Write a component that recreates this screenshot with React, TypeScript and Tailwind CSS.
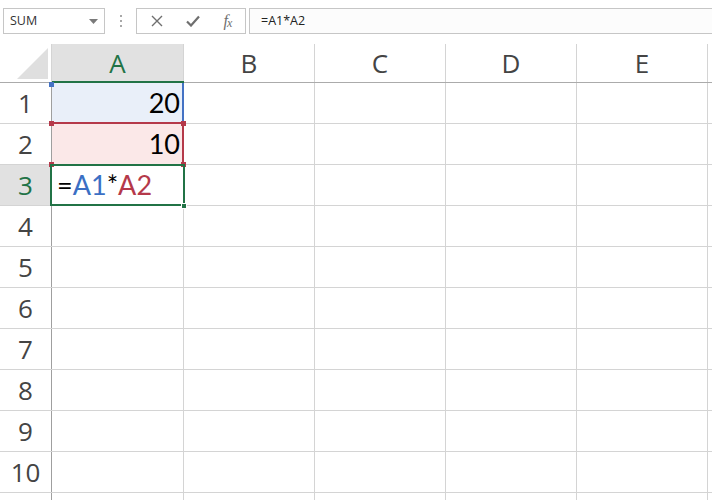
import React from "react";

const cols = ["A", "B", "C", "D", "E"];
const rows = [1, 2, 3, 4, 5, 6, 7, 8, 9, 10];

function Corner({ className }: { className: string }) {
  return <span className={`absolute w-[5px] h-[5px] ${className}`} />;
}

export default function App() {
  return (
    <div className="w-[712px] h-[500px] overflow-hidden bg-white font-['Open_Sans',sans-serif] text-[#444]">
      {/* Formula bar */}
      <div className="h-[44px] flex items-start pt-[8px] pl-[3px]">
        <div className="w-[102px] h-[26px] border border-[#c6c6c6] flex items-center justify-between pl-[6px] pr-[6px]">
          <span className="text-[12.5px] text-[#333]">SUM</span>
          <svg width="9" height="5" viewBox="0 0 9 5">
            <path d="M0 0h9L4.5 5z" fill="#7a7a7a" />
          </svg>
        </div>
        <div className="w-[31px] h-[26px] flex flex-col items-center justify-center gap-[3px]">
          <span className="w-[2px] h-[2px] bg-[#a8a8a8]" />
          <span className="w-[2px] h-[2px] bg-[#a8a8a8]" />
          <span className="w-[2px] h-[2px] bg-[#a8a8a8]" />
        </div>
        <div className="w-[110px] h-[26px] border border-[#c6c6c6] flex items-center">
          <div className="w-[37px] flex justify-center pl-[2px]">
            <svg width="12" height="12" viewBox="0 0 12 12">
              <path d="M1 1l10 10M11 1L1 11" stroke="#6f6f6f" strokeWidth="1.4" />
            </svg>
          </div>
          <div className="w-[37px] flex justify-center">
            <svg width="14" height="12" viewBox="0 0 14 12">
              <path d="M1 6.5l4 4L13 1.5" stroke="#6f6f6f" strokeWidth="2.2" fill="none" />
            </svg>
          </div>
          <div className="w-[34px] flex justify-center font-['Liberation_Serif',serif] italic text-[#6f6f6f] text-[16px] leading-none">
            f<span className="text-[12px] -ml-[1px] mt-[4px]">x</span>
          </div>
        </div>
        <div className="ml-[3px] flex-1 h-[26px] border border-r-0 border-[#c6c6c6] bg-[#fcfcfc] flex items-center pl-[11px]">
          <span className="text-[12.5px] text-[#222]">=A1*A2</span>
        </div>
      </div>

      {/* Column headers */}
      <div className="flex h-[39px] border-b border-[#ababab]">
        <div className="relative w-[52px] border-r border-[#d4d4d4]">
          <svg className="absolute left-0 top-0" width="51" height="38" viewBox="0 0 51 38">
            <path d="M48 4V35H17z" fill="#dfdfdf" />
          </svg>
        </div>
        {cols.map((c, i) => (
          <div
            key={c}
            className={`relative flex justify-center text-[26px] leading-[38px] border-r border-[#d4d4d4] ${
              i === 0 ? "w-[132px] bg-[#e1e1e1] text-[#217346]" : "w-[131px]"
            }`}
          >
            {c}
            {i === 0 && <span className="absolute left-0 right-[-1px] bottom-[-1px] h-[2px] bg-[#217346]" />}
          </div>
        ))}
        <div className="flex-1" />
      </div>

      {/* Rows */}
      {rows.map((r) => (
        <div key={r} className="flex h-[41px] border-b border-[#d4d4d4]">
          <div
            className={`w-[52px] flex justify-center text-[26px] leading-[40px] border-r border-[#9f9f9f] ${
              r === 3 ? "bg-[#e1e1e1] text-[#217346]" : ""
            }`}
          >
            {r}
          </div>
          {cols.map((c, i) => {
            if (i === 0 && r === 1) {
              return (
                <div key={c} className="relative w-[132px] bg-[#e9eff9] border-r-2 border-r-[#4472c4] flex justify-end pr-[2px] font-['Lato',sans-serif] text-[27px] leading-[40px] text-black">
                  20
                  <Corner className="-left-[3px] -top-[1px] bg-[#4472c4]" />
                </div>
              );
            }
            if (i === 0 && r === 2) {
              return (
                <div key={c} className="relative w-[132px] bg-[#fbe8e8] border-r-2 border-r-[#b5394a] flex justify-end pr-[2px] font-['Lato',sans-serif] text-[27px] leading-[40px] text-black">
                  <span className="absolute left-0 right-[-2px] top-[-2px] h-[2px] bg-[#b5394a]" />
                  10
                  <Corner className="-left-[3px] -top-[3px] bg-[#b5394a]" />
                  <Corner className="-right-[4px] -top-[3px] bg-[#b5394a]" />
                  <Corner className="-left-[3px] -bottom-[3px] bg-[#b5394a]" />
                  <Corner className="-right-[4px] -bottom-[3px] bg-[#b5394a]" />
                </div>
              );
            }
            if (i === 0 && r === 3) {
              return (
                <div key={c} className="relative w-[132px] border-r border-[#d4d4d4] flex pl-[5px] font-['Lato',sans-serif] text-[27px] leading-[40px] text-black">
                  <span className="absolute -left-[2px] -top-[1px] right-[-2px] -bottom-[1px] border-2 border-[#217346]" />
                  <span>=</span>
                  <span className="text-[#3b6fc4]">A1</span>
                  <span>*</span>
                  <span className="text-[#b5394a]">A2</span>
                  <span className="absolute -right-[4px] -bottom-[4px] w-[6px] h-[6px] bg-[#217346] border border-white" />
                </div>
              );
            }
            return (
              <div
                key={c}
                className={`border-r border-[#d4d4d4] ${i === 0 ? "w-[132px]" : "w-[131px]"}`}
              />
            );
          })}
          <div className="flex-1" />
        </div>
      ))}
      <div className="flex h-[41px]">
        <div className="w-[52px] border-r border-[#9f9f9f]" />
        <div className="w-[132px] border-r border-[#d4d4d4]" />
        {cols.slice(1).map((c) => (
          <div key={c} className="w-[131px] border-r border-[#d4d4d4]" />
        ))}
      </div>
    </div>
  );
}
